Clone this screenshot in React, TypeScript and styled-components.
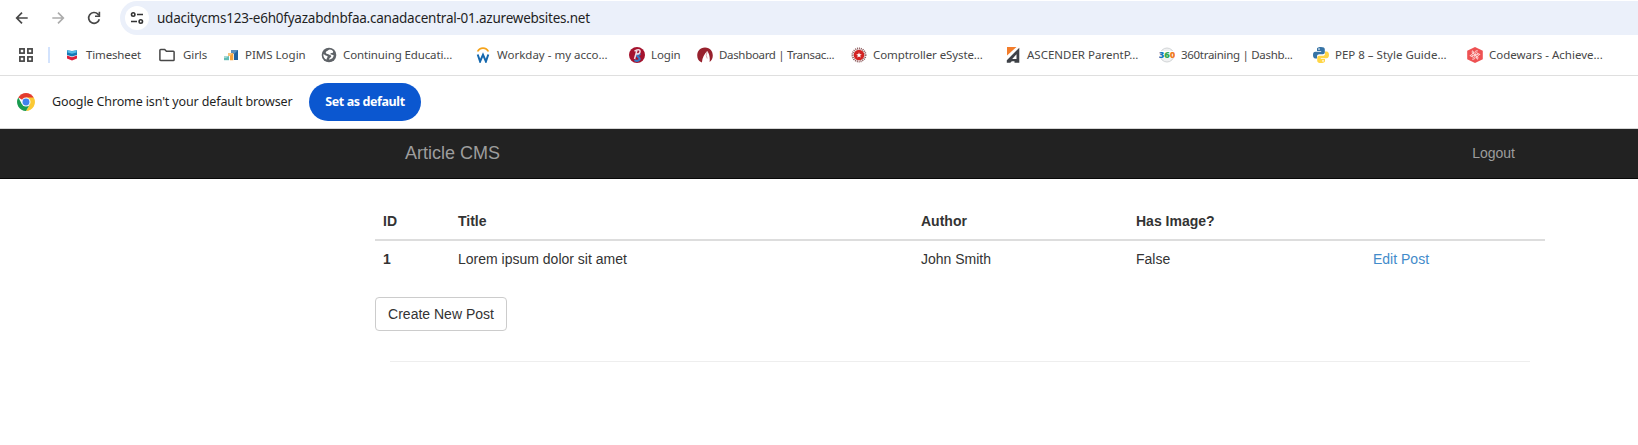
import React from "react";
import styled, { createGlobalStyle } from "styled-components";

const GlobalStyle = createGlobalStyle`
  * { box-sizing: border-box; }
  body { margin: 0; background: #fff; overflow: hidden; }
`;

const chromeFont = `"Noto Sans", "Open Sans", sans-serif`;
const pageFont = `"Liberation Sans", Arial, sans-serif`;

const Window = styled.div`
  display: flex;
  flex-direction: column;
  width: 1638px;
  height: 445px;
  overflow: hidden;
  background: #fff;
`;

const Toolbar = styled.div`
  display: flex;
  align-items: center;
  height: 36px;
  padding: 1px 0 1px 12px;
`;

const NavButton = styled.div`
  display: flex;
  align-items: center;
  justify-content: center;
  width: 36px;
  margin-left: -8px;
  margin-right: 8px;
`;

const AddressBar = styled.div`
  display: flex;
  align-items: center;
  flex: 1;
  height: 34px;
  padding-left: 5px;
  border-radius: 17px 0 0 17px;
  background: #ebf0fa;
`;

const SiteInfo = styled.div`
  display: flex;
  align-items: center;
  justify-content: center;
  width: 24px;
  height: 24px;
  margin-right: 8px;
  border-radius: 50%;
  background: #fff;
`;

const Text = styled.span<{ $size: number; $track: number; $color?: string; $weight?: number }>`
  font-family: ${chromeFont};
  font-size: ${(p) => p.$size}px;
  font-weight: ${(p) => p.$weight ?? 400};
  letter-spacing: ${(p) => p.$track}px;
  color: ${(p) => p.$color ?? "#1f1f1f"};
  line-height: 20px;
  white-space: nowrap;
`;

const BookmarksBar = styled.div`
  display: flex;
  align-items: center;
  height: 40px;
  padding: 0 0 2px 18px;
  border-bottom: 1px solid #dfdfdf;
`;

const Separator = styled.div`
  width: 2px;
  height: 16px;
  margin: 0 14px 0 14px;
  background: #d3e3fd;
`;

const Bookmark = styled.div<{ $width: number; $gap?: number }>`
  display: flex;
  align-items: center;
  gap: ${(p) => p.$gap ?? 6}px;
  flex: none;
  width: ${(p) => p.$width}px;
  svg { flex: none; }
`;

const InfoBar = styled.div`
  display: flex;
  align-items: center;
  height: 53px;
  padding-left: 17px;
  border-bottom: 1px solid #d5d5d5;
`;

const InfoMessage = styled.div`
  display: flex;
  width: 257px;
  margin-left: 17px;
`;

const DefaultButton = styled.button`
  display: flex;
  align-items: center;
  justify-content: center;
  width: 112px;
  height: 38px;
  padding: 0;
  border: 0;
  border-radius: 19px;
  background: #0b57d0;
`;

const Navbar = styled.nav`
  height: 50px;
  background: #222;
  border-bottom: 1px solid #080808;
  font-family: ${pageFont};
  color: #9d9d9d;
`;

const Container = styled.div`
  width: 1170px;
  margin-left: 375px;
`;

const NavContent = styled(Container)`
  display: flex;
  justify-content: space-between;
  align-items: center;
  height: 48px;
  padding: 0 30px;
`;

const Brand = styled.span`
  font-size: 18px;
  line-height: 20px;
`;

const NavLink = styled.span`
  font-size: 14px;
  line-height: 20px;
`;

const Content = styled(Container)`
  padding-top: 24px;
  font-family: ${pageFont};
  font-size: 14px;
  line-height: 20px;
  color: #333;
`;

const Table = styled.table`
  width: 1170px;
  table-layout: fixed;
  border-spacing: 0;
  margin-bottom: 20px;
  th, td { padding: 8px; text-align: left; }
  thead th { border-bottom: 2px solid #ddd; }
`;

const Column = styled.col<{ $width: number }>`
  width: ${(p) => p.$width}px;
`;

const EditLink = styled.span`
  color: #428bca;
`;

const CreateButton = styled.button`
  display: block;
  width: 132px;
  height: 34px;
  padding: 0;
  border: 1px solid #ccc;
  border-radius: 4px;
  background: #fff;
  color: #333;
  font: inherit;
`;

const Rule = styled.hr`
  margin: 30px 15px 0;
  border: 0;
  border-top: 1px solid #eee;
`;

const Icon = ({ children, size = 16 }: { children: React.ReactNode; size?: number }) => (
  <svg width={size} height={size} viewBox="0 0 16 16" fill="none">{children}</svg>
);

const Back = () => (
  <Icon><path d="M13.7 8H2.8M8 2.7 2.7 8 8 13.3" stroke="#474747" strokeWidth="1.7" /></Icon>
);
const Forward = () => (
  <Icon><path d="M2.3 8h10.9M8 2.7 13.3 8 8 13.3" stroke="#acacac" strokeWidth="1.7" /></Icon>
);
const Reload = () => (
  <Icon>
    <path d="M13.3 9.2A5.4 5.4 0 1 1 12 4.2l1 1" stroke="#474747" strokeWidth="1.7" />
    <path d="M13.4 1.8v4.4H9" stroke="#474747" strokeWidth="1.6" />
  </Icon>
);
const Tune = () => (
  <Icon>
    <g stroke="#333" strokeWidth="1.6">
      <circle cx="4.2" cy="4.5" r="1.7" /><path d="M8 4.5h6M2 11.5h6" />
      <circle cx="11.8" cy="11.5" r="1.7" />
    </g>
  </Icon>
);
const Apps = () => (
  <Icon>
    <g stroke="#474747" strokeWidth="1.7">
      <rect x="1.9" y="1.9" width="4.2" height="4.2" /><rect x="9.9" y="1.9" width="4.2" height="4.2" />
      <rect x="1.9" y="9.9" width="4.2" height="4.2" /><rect x="9.9" y="9.9" width="4.2" height="4.2" />
    </g>
  </Icon>
);
const Chevron = () => (
  <Icon>
    <path d="M3 3.2 8 4l5-.8V8L8 9.500 3 8z" fill="#1477b5" />
    <path d="M3.500 3.200 8 4.200l4.500-1v2.300L8 6.800 3.500 5.500z" fill="#55bce9" />
    <path d="M3 8.600 8 10.300l5-1.700v2.800L8 13.500 3 11.400z" fill="#dc1f3c" />
  </Icon>
);
const Folder = () => (
  <Icon><path d="M.9 3.3c0-.5.3-.8.8-.8h4l1.7 1.8h6.9c.5 0 .8.3.8.8v7.6c0 .5-.3.8-.8.8H1.7c-.5 0-.8-.3-.8-.8z" stroke="#474747" strokeWidth="1.5" /></Icon>
);
const Pims = () => (
  <Icon>
    <path d="M8 3h7v10h-4V7H8z" fill="#21609f" /><path d="M8 3h7l-4 4H8z" fill="#5c8fbd" />
    <path d="M5 6h5.300v7.2H7V9H5z" fill="#f6a13b" /><path d="M5 6h5L7 9H5z" fill="#f9c27b" />
    <path d="M1 9h5v4.2H1z" fill="#62bcb5" /><path d="M1 9h5l-3 2H1z" fill="#a5d9d3" />
  </Icon>
);
const Globe = () => (
  <Icon>
    <circle cx="8" cy="8" r="7.3" fill="#5f6368" />
    <path d="M10.800 3C9.600 2.200 8 2.200 7.200 3.200c-.7.9-1.800.8-2.300 1.800-.5 1.100.4 2 1.700 1.900 1.300 0 1.300.8 2.400 1 1.600.2 1.600 2 .3 2.500-.9.400-1 1.300-1.300 2.100 2.300.3 4.700-1.700 4.700-4.400-1.100.2-1.600-.4-2.500-.5-.9-.2-1-1-.4-1.400.8-.4 2-.2 2.300-1C12.500 4.400 11.500 3.500 10.800 3z" fill="#fff" />
    <path d="M2.300 7.200c-.2 2.600 1.300 4.700 3.300 5.400.4-.8-.1-1.500.7-2.100.9-.8.300-1.600-.8-1.800-1.300-.2-1.700-1.300-3.200-1.500z" fill="#fff" />
  </Icon>
);
const Workday = () => (
  <Icon>
    <path d="M2.600 4.500a6 6 0 0 1 10.800 0" stroke="#f5a31b" strokeWidth="1.700" />
    <path d="m2.700 7.500 2.400 7 2.900-6.800 2.900 6.800 2.400-7" stroke="#1568ae" strokeWidth="2" />
  </Icon>
);
const Ps = () => (
  <Icon>
    <circle cx="8" cy="8" r="8" fill="#a5132e" />
    <path d="M11.500 7.800C9.500 6.800 7.300 8 8.500 9.300c1 1 3 1.800 1.700 3.600-1.100 1.300-3.200 1-4.700.2" stroke="#337cc7" strokeWidth="2.200" />
    <path d="m5.500 12 2.400-8.500M5.500 4.300C8 1.900 11.500 2.200 11 4.800c-.3 1.800-2.300 2.400-4 2.300" stroke="#f3dce4" strokeWidth="1.500" />
  </Icon>
);
const Arch = () => (
  <Icon>
    <path d="M3.500 14.800C-1.800 11.500-.9 1 8 .6c8.900.4 9.800 10.600 4.600 14.500.5-4 0-7.600-2.300-11.100C7.500 7 5.200 10.500 4.900 15.500z" fill="#97212d" />
    <path d="M10.300 4 9.200 8.300l1 3.200" stroke="#c8868c" strokeWidth=".7" />
  </Icon>
);
const Seal = () => (
  <Icon>
    <circle cx="8" cy="8" r="6.500" stroke="#8c5a5c" strokeWidth="2" strokeDasharray="1 .86" />
    <circle cx="8" cy="8" r="5.300" fill="#d22323" />
    <path d="m8 5.200.7 2 2.100.1-1.600 1.300.5 2L8 9.500l-1.700 1.100.5-2-1.600-1.300 2.100-.1z" fill="#fff" />
  </Icon>
);
const Ascender = () => (
  <Icon>
    <path d="M2 0h9.500L2 8.500z" fill="#f37d2b" />
    <path d="M14.300.8v15H9.500v-1.600H6.800l-1.500 1.600H1.800v-2.600zM11.500 7.200l-4.300 4.700h4.300z" fill="#3e4147" fillRule="evenodd" />
  </Icon>
);
const ThreeSixtyLabel = styled.text`
  font-family: ${chromeFont};
  font-size: 9.5px;
  font-weight: 900;
`;
const ThreeSixty = () => (
  <Icon>
    <circle cx="8" cy="8" r="7" fill="#f0f1f2" stroke="#d2d5d7" />
    <path d="M0 4h16v7H0z" fill="#fff" />
    <ThreeSixtyLabel x="-.3" y="10.700" textLength="16.600" lengthAdjust="spacingAndGlyphs">
      <tspan fill="#1477bd">3</tspan><tspan fill="#31a750">6</tspan><tspan fill="#ef7b22">0</tspan>
    </ThreeSixtyLabel>
  </Icon>
);
const Python = () => (
  <Icon>
    <path d="M7.900 0C4.500 0 4 1 4 2.200V4h4.200v.8H2.400C.8 4.800 0 6 0 8s.8 3.500 2.400 3.500H4V9.300C4 8 5 7.200 6.300 7.200h3.500c1.200 0 2-.9 2-2V2.300C11.800.8 10.500 0 7.900 0z" fill="#3673a5" />
    <path d="M8.100 16c3.400 0 3.900-1 3.900-2.200V12H7.800v-.8h5.800C15.200 11.200 16 10 16 8s-.8-3.500-2.400-3.500H12v2.200c0 1.300-1 2.100-2.300 2.100H6.200c-1.200 0-2 .9-2 2v2.900C4.200 15.200 5.500 16 8.100 16z" fill="#ffd545" />
    <circle cx="6" cy="2.100" r=".8" fill="#fff" /><circle cx="10" cy="13.900" r=".8" fill="#fff" />
  </Icon>
);
const Codewars = () => (
  <Icon>
    <path d="m8 0 7.800 3.700v8.600L8 16 .2 12.300V3.700z" fill="#ee5253" />
    <g stroke="#ffe2e0" strokeWidth=".9">
      {[0, 60, 120, 180, 240, 300].map((a) => (
        <path key={a} transform={`rotate(${a} 8 8)`} d="M8 8c-.2-1.900.8-2.800 2.500-2.900M7.500 5.600c.6-1.300 1.600-1.900 3.100-2" />
      ))}
    </g>
  </Icon>
);
const ChromeLogo = () => (
  <Icon size={18}>
    <path d="M8 8 1.100 4A8 8 0 0 1 14.900 4z" fill="#e33b2e" />
    <path d="M8 8V4h6.900A8 8 0 0 1 8 16l3.500-6z" fill="#fbc934" />
    <path d="M8 8l3.500 2L8 16A8 8 0 0 1 1.100 4l3.400 6z" fill="#199b50" />
    <circle cx="8" cy="8" r="4" fill="#fff" /><circle cx="8" cy="8" r="3.100" fill="#3f82ed" />
  </Icon>
);

const bookmarks = [
  { label: "Timesheet", icon: Chevron, width: 95, track: -0.15 },
  { label: "Girls", icon: Folder, width: 64, track: -0.1, gap: 8 },
  { label: "PIMS Login", icon: Pims, width: 98, track: 0 },
  { label: "Continuing Educati...", icon: Globe, width: 154, track: -0.12 },
  { label: "Workday - my acco...", icon: Workday, width: 154, track: 0 },
  { label: "Login", icon: Ps, width: 68, track: -0.1 },
  { label: "Dashboard | Transac...", icon: Arch, width: 154, track: -0.33 },
  { label: "Comptroller eSyste...", icon: Seal, width: 154, track: -0.1 },
  { label: "ASCENDER ParentP...", icon: Ascender, width: 154, track: 0 },
  { label: "360training | Dashb...", icon: ThreeSixty, width: 154, track: -0.3 },
  { label: "PEP 8 – Style Guide...", icon: Python, width: 154, track: 0 },
  { label: "Codewars - Achieve...", icon: Codewars, width: 154, track: 0 },
];

export default function App() {
  return (
    <Window>
      <GlobalStyle />
      <Toolbar>
        <NavButton><Back /></NavButton>
        <NavButton><Forward /></NavButton>
        <NavButton><Reload /></NavButton>
        <AddressBar>
          <SiteInfo><Tune /></SiteInfo>
          <Text $size={13.5} $track={-0.23}>udacitycms123-e6h0fyazabdnbfaa.canadacentral-01.azurewebsites.net</Text>
        </AddressBar>
      </Toolbar>
      <BookmarksBar>
        <Apps />
        <Separator />
        {bookmarks.map(({ label, icon: Favicon, width, track, gap }) => (
          <Bookmark key={label} $width={width} $gap={gap}>
            <Favicon />
            <Text $size={11.5} $track={track} $color="#474747">{label}</Text>
          </Bookmark>
        ))}
      </BookmarksBar>
      <InfoBar>
        <ChromeLogo />
        <InfoMessage>
          <Text $size={12.5} $track={-0.13}>Google Chrome isn't your default browser</Text>
        </InfoMessage>
        <DefaultButton>
          <Text $size={12.5} $track={-0.4} $weight={700} $color="#fff">Set as default</Text>
        </DefaultButton>
      </InfoBar>
      <Navbar>
        <NavContent>
          <Brand>Article CMS</Brand>
          <NavLink>Logout</NavLink>
        </NavContent>
      </Navbar>
      <Content>
        <Table>
          <colgroup>
            <Column $width={75} />
            <Column $width={463} />
            <Column $width={215} />
            <Column $width={237} />
            <Column $width={180} />
          </colgroup>
          <thead>
            <tr><th>ID</th><th>Title</th><th>Author</th><th>Has Image?</th><th /></tr>
          </thead>
          <tbody>
            <tr>
              <th>1</th>
              <td>Lorem ipsum dolor sit amet</td>
              <td>John Smith</td>
              <td>False</td>
              <td><EditLink>Edit Post</EditLink></td>
            </tr>
          </tbody>
        </Table>
        <CreateButton>Create New Post</CreateButton>
        <Rule />
      </Content>
    </Window>
  );
}
